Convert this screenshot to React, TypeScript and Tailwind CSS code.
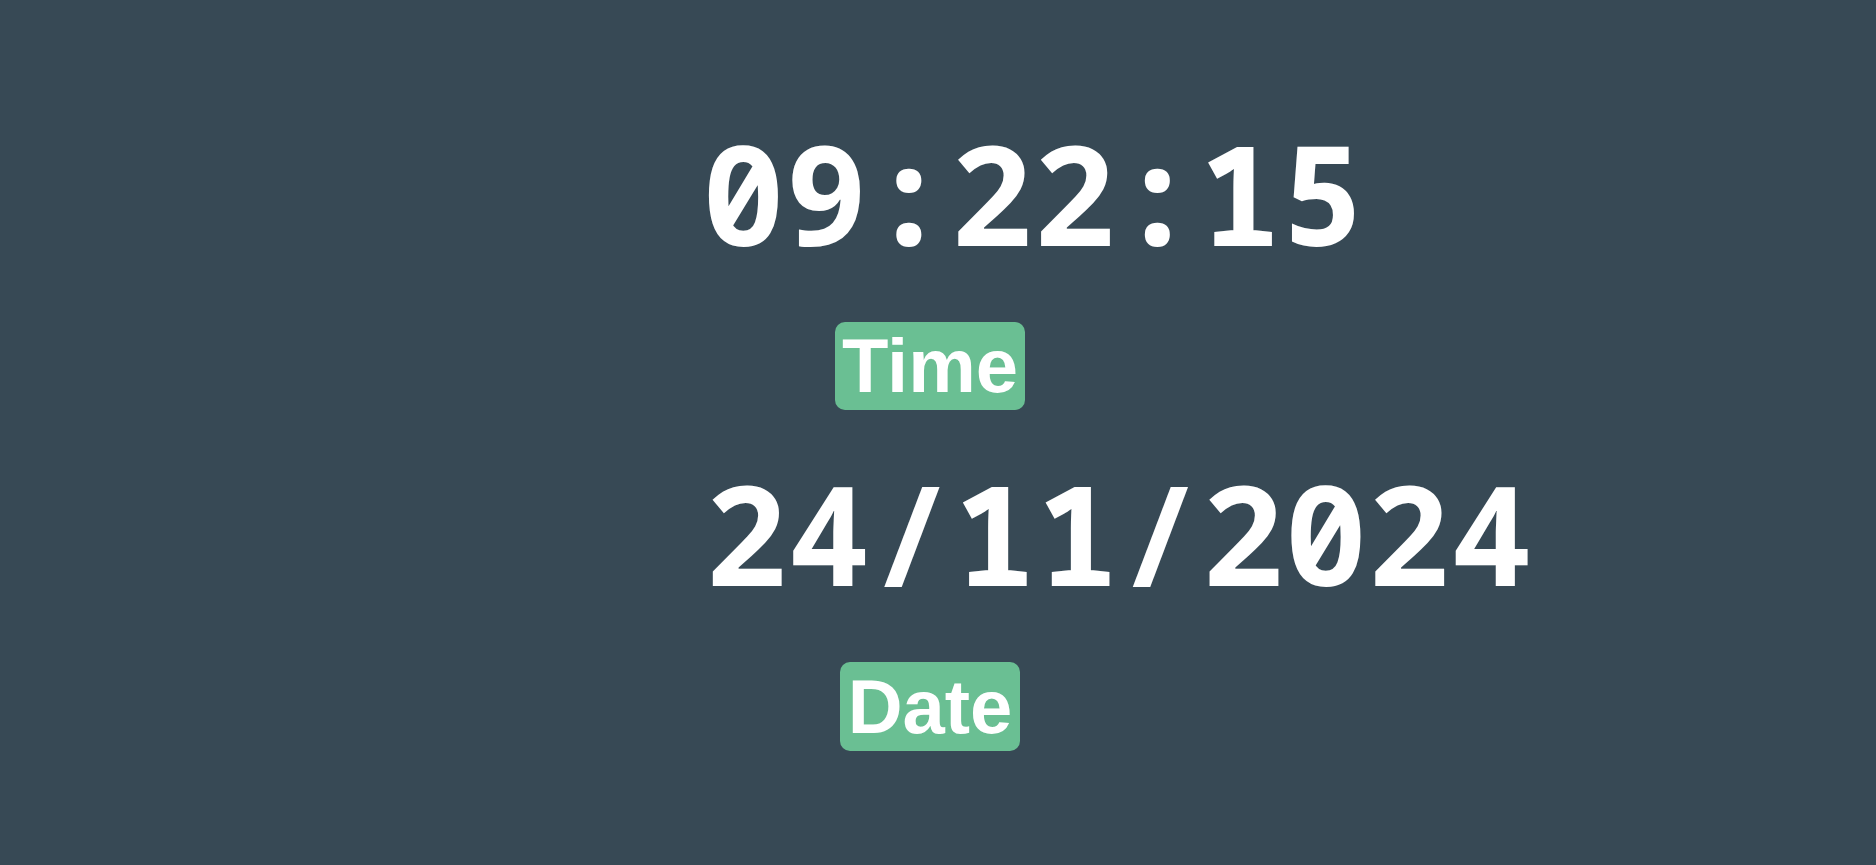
import React from "react";

export default function App() {
  return (
    <div className="min-h-screen w-full bg-[#374955] overflow-hidden pt-[123px]">
      <div className="ml-[702px] w-[456px] flex flex-col items-center">
        <div className="self-start text-white font-bold leading-none text-[138px] whitespace-nowrap font-['Noto_Sans_Mono','DejaVu_Sans_Mono',monospace]">
          09:22:15
        </div>
        <div className="mt-[61px] w-[190px] h-[88px] rounded-[10px] bg-[#6abf93] flex items-center justify-center text-white font-bold text-[76px] leading-none font-['Liberation_Sans',Arial,sans-serif]">
          Time
        </div>
        <div className="mt-[53px] ml-[3px] self-start text-white font-bold leading-none text-[138px] whitespace-nowrap font-['Noto_Sans_Mono','DejaVu_Sans_Mono',monospace]">
          24/11/2024
        </div>
        <div className="mt-[61px] w-[180px] h-[89px] rounded-[10px] bg-[#6abf93] flex items-center justify-center text-white font-bold text-[76px] leading-none font-['Liberation_Sans',Arial,sans-serif]">
          Date
        </div>
      </div>
    </div>
  );
}
